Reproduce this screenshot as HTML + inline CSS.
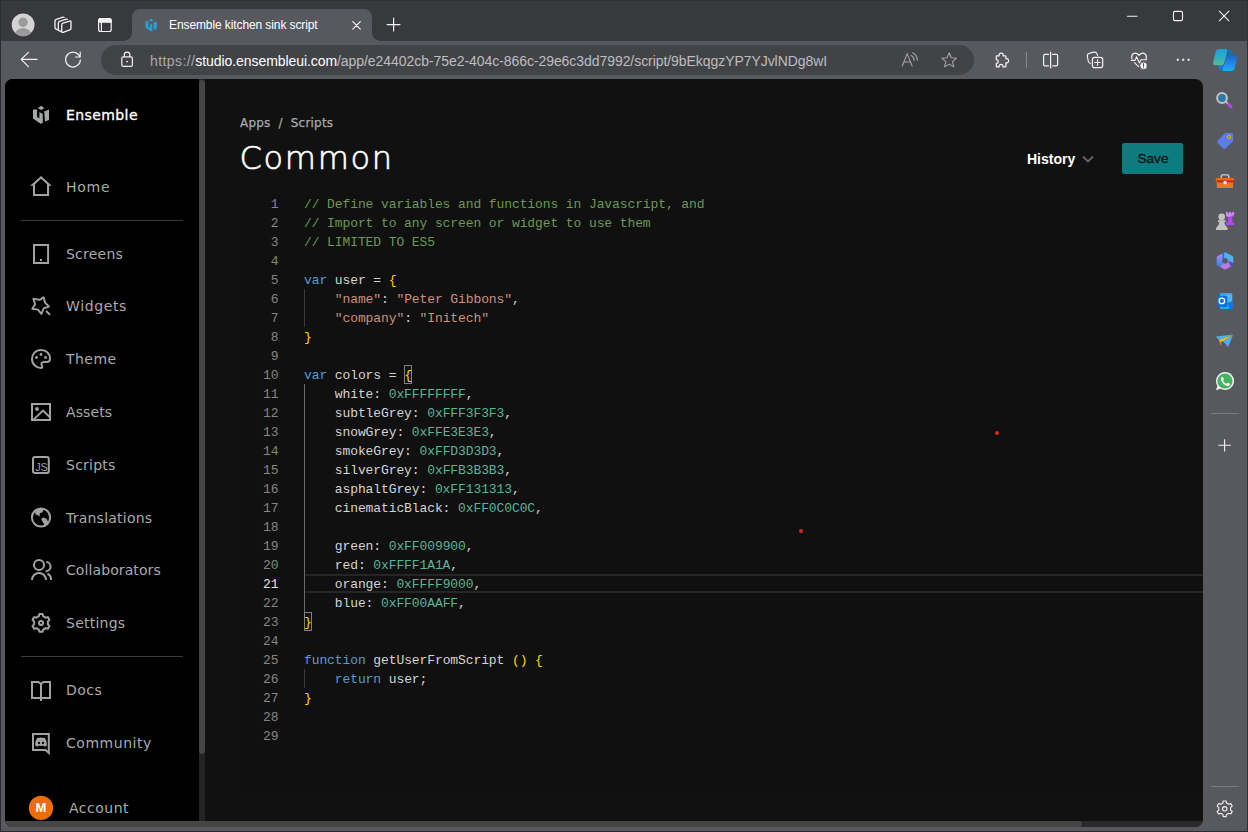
<!DOCTYPE html>
<html lang="en">
<head>
<meta charset="utf-8">
<title>Ensemble kitchen sink script</title>
<style>
*{box-sizing:border-box;margin:0;padding:0}
html,body{width:1248px;height:832px;overflow:hidden;background:#58595e;font-family:"Liberation Sans",sans-serif}
.abs{position:absolute}
#tabstrip{left:0;top:0;width:1248px;height:41px;background:#38393d}
#toolbar{left:0;top:41px;width:1248px;height:38px;background:#58595e}
#leftedge{left:0;top:0;width:1px;height:832px;background:#2b2b30}
#rightedge{left:1247px;top:0;width:1px;height:832px;background:#313236}
#botedge{left:0;top:831px;width:1248px;height:1px;background:#2b2b2f}
#topedge{left:0;top:0;width:1248px;height:1px;background:#2f3034}
#tab{left:132px;top:9px;width:240px;height:32px;background:#58595e;border-radius:8px 8px 0 0}
#tab:before,#tab:after{content:"";position:absolute;bottom:0;width:8px;height:8px}
#tab:before{left:-8px;background:radial-gradient(circle at 0 0,transparent 7.5px,#58595e 8px)}
#tab:after{right:-8px;background:radial-gradient(circle at 100% 0,transparent 7.5px,#58595e 8px)}
#tabtitle{left:169px;top:18px;font-size:12px;color:#fff;white-space:nowrap;letter-spacing:-0.1px}
#addr{left:101px;top:45px;width:873px;height:30px;border-radius:15px;background:#424347}
#url{left:150px;top:53px;font-size:14px;color:#bdbdc0;white-space:nowrap;letter-spacing:-0.02px}
#url b{font-weight:normal;color:#fff;letter-spacing:-0.07px}#url i{font-style:normal;color:#a9a9ad;letter-spacing:0.41px}#url u{text-decoration:none;letter-spacing:-0.06px}
#page{left:5px;top:79px;width:1198px;height:748px;background:#111111;border-radius:8px;overflow:hidden}
#side{left:0;top:0;width:194px;height:742px;background:#000}
#sscroll{left:194px;top:0;width:6px;height:742px;background:#222325}
#sthumb{left:194px;top:1px;width:6px;height:674px;background:#454545;border-radius:3px}
#hscroll{left:0;top:742px;width:1198px;height:6px;background:#2a2a2c}
#hthumb{left:0;top:742px;width:1077px;height:6px;background:#454545;border-radius:0 3px 3px 0}
.nav{position:absolute;left:61px;font-size:14px;color:#aaaaaa;white-space:nowrap;line-height:18px;font-family:"DejaVu Sans","Liberation Sans",sans-serif}
.sep{position:absolute;left:16px;width:162px;height:1px;background:#3a3a3a}
.ic{position:absolute;left:24px;width:24px;height:24px}
.ic svg{display:block}
#editor{left:235px;top:115px;width:963px;height:598px;background:#101010}
.ln{position:absolute;left:0;width:38.5px;text-align:right;font:13px/19px "Liberation Mono",monospace;letter-spacing:-0.1px;color:#858585}
.cl{position:absolute;left:64px;font:13px/19px "Liberation Mono",monospace;letter-spacing:-0.1px;color:#d4d4d4;white-space:pre}
.c{color:#6a9955}.k{color:#569cd6}.s{color:#ce9178}.n{color:#5bb498}.b{color:#ffd700}
#crumb{left:235px;top:37px;font-size:12px;letter-spacing:0.2px;-webkit-text-stroke:0.25px #a9a9a9;color:#a9a9a9;white-space:nowrap;font-family:"DejaVu Sans","Liberation Sans",sans-serif}
#title{left:234.5px;top:59px;font-size:32px;letter-spacing:1.7px;font-weight:200;-webkit-text-stroke:0.65px #fff;line-height:40px;color:#fff;white-space:nowrap;font-family:"DejaVu Sans","Liberation Sans",sans-serif}
#hist{left:1022px;top:72px;font-size:14px;font-weight:bold;color:#fff;white-space:nowrap}
#chev{left:1077px;top:75.5px}
#save{left:1117px;top:64px;width:61px;height:31px;background:#0e7b7f;color:#0c1414;font-size:13.5px;line-height:31px;text-align:center;border-radius:2px;-webkit-text-stroke:0.35px #0c1414;padding-left:1px;letter-spacing:0.1px}
#curline{left:64px;top:380px;width:899px;height:19px;border-top:2px solid #262626;border-bottom:2px solid #262626}
.ig{left:64px;width:1px;background:#3a3a3a}
.iga{background:#6a6a6a}
.bm{width:8.4px;height:19px;border:1px solid #808080;background:rgba(0,100,0,.05)}
.lna{color:#e0e0e0}
.dot{width:4px;height:4px;border-radius:50%;background:#d9271a}
#avm{left:24px;top:719px;width:24px;height:20px;text-align:center;font-size:13px;font-weight:bold;line-height:20px;color:#fff}
#nens{color:#fff;-webkit-text-stroke:0.3px #fff}
</style>
</head>
<body>
<div class="abs" id="tabstrip"></div>
<div class="abs" id="toolbar"></div>
<div class="abs" id="topedge"></div>
<div class="abs" id="tab"></div>
<div class="abs" id="tabtitle">Ensemble kitchen sink script</div>
<div class="abs" id="addr"></div>
<div class="abs" id="url"><i>https://</i><b>studio.ensembleui.com</b><u>/app/e24402cb-75e2-404c-866c-29e6c3dd7992/script/9bEkqgzYP7YJvlNDg8wI</u></div>
<!--CHROMEICONS-->
<svg class="abs" id="chromeicons" style="left:0;top:0" width="1248" height="80" viewBox="0 0 1248 80" fill="none" stroke="#f2f2f2" stroke-width="1.1" stroke-linecap="round" stroke-linejoin="round">
<defs><clipPath id="avc"><circle cx="23.1" cy="24.8" r="11.4"/></clipPath></defs>
<g stroke="none"><circle cx="23.1" cy="24.8" r="11.4" fill="#d3d3d3"/><circle cx="23.1" cy="22.2" r="4.7" fill="#9a9a9a"/><ellipse cx="23.1" cy="36.5" rx="9" ry="8.6" fill="#9a9a9a" clip-path="url(#avc)"/></g>
<path stroke-width="1.3" d="M61.7 25 Q61.7 23.6 63 23.2 L69.6 21.1 Q71 20.7 71 22.1 V28.3 Q71 29.5 69.8 29.9 L63.2 32.3 Q61.7 32.8 61.7 31.4Z"/>
<path stroke-width="1.3" d="M61.2 31.6 L59.4 30.9 Q58.3 30.5 58.3 29.3 V23 Q58.3 21.7 59.6 21.3 L66.3 19.2 Q67 19 67.4 19.4"/>
<path stroke-width="1.3" d="M57.8 29.9 L56.1 29.2 Q55 28.8 55 27.6 V21 Q55 19.7 56.3 19.3 L63 17.2 Q63.7 17 64.1 17.4"/>
<rect x="98.6" y="18.5" width="12.6" height="13" rx="2" stroke-width="1.2"/>
<path d="M98.6 22.3 V20.5 Q98.6 18.5 100.6 18.5 H109.2 Q111.2 18.5 111.2 20.5 V22.3Z" fill="#f2f2f2"/>
<path d="M101.4 22.3 V31.4" stroke-width="1.2"/>
<g fill="#1fa3dc" stroke="none" transform="translate(151.2 25) scale(0.7) translate(-41.1 -114.6)"><path d="M41.1 105.7 L44.4 107.9 L41.1 110.1 L37.8 107.9Z"/><path d="M33 109.4 H37.1 V117.3 L39.4 118.3 V112.1 L42.8 114.1 V122.9 L40.6 123.7 L33 118.6Z"/><path d="M44.2 111.4 L49 109.4 V119.9 L45 121.6Z"/></g>
<path d="M352.8 21.6 L360.3 29.1 M360.3 21.6 L352.8 29.1" stroke-width="1.2"/>
<path d="M387.2 24.6 H400 M393.6 18.2 V31" stroke-width="1.2"/>
<path d="M1127.5 16.3 H1137" stroke-width="1.1"/>
<rect x="1173.5" y="11.4" width="9" height="9.2" rx="1.3" stroke-width="1.1"/>
<path d="M1219.3 11.2 L1228.9 20.8 M1228.9 11.2 L1219.3 20.8" stroke-width="1.1"/>
<path d="M21.2 59.4 H37 M28.4 52.4 L21.2 59.4 L28.4 66.6" stroke-width="1.2"/>
<path d="M80.2 57 H75.6 M80.2 52.2 V57 M79.6 56.2 A7.4 7.4 0 1 0 80.4 60" stroke-width="1.2"/>
<rect x="121.8" y="56.8" width="10.6" height="9.6" rx="1.6" stroke-width="1.2"/>
<path d="M124.3 56.6 V55 A2.8 2.8 0 0 1 129.9 55 V56.6" stroke-width="1.2"/>
<circle cx="127.1" cy="61.6" r="0.9" fill="#f2f2f2" stroke="none"/>
<g stroke="#a4a4a8" stroke-width="1.1"><path d="M902.3 66 L907.2 53.6 L912.1 66 M904 62 H910.4"/><path d="M911.2 55.6 A5 5 0 0 1 914 60.4 M912.6 52.8 A8 8 0 0 1 917.2 60.2"/></g>
<path stroke="#a4a4a8" stroke-width="1.1" d="M949.2 52.8 L951.3 57.8 L956.6 58.2 L952.5 61.7 L953.8 66.9 L949.2 64.1 L944.6 66.9 L945.9 61.7 L941.8 58.2 L947.1 57.8Z"/>
<path transform="translate(-2.3 0.2)" stroke-width="1.25" d="M999.2 55.6 H1001.4 A2.1 2.1 0 1 1 1005.4 55.6 H1007.6 Q1008.2 55.6 1008.2 56.2 V58.6 A2.1 2.1 0 1 1 1008.2 62.6 V66 Q1008.2 66.6 1007.6 66.6 H1005.2 A1.9 1.9 0 1 0 1001.6 66.6 H999.2 Q998.6 66.6 998.6 66 V63.2 A1.9 1.9 0 1 0 998.6 59.4 V56.2 Q998.6 55.6 999.2 55.6Z"/>
<path d="M1026.4 52.4 V67.4" stroke="#8c8c91" stroke-width="1"/>
<path stroke-width="1.2" d="M1048.6 54.4 H1045 Q1043.6 54.4 1043.6 55.8 V64.4 Q1043.6 65.8 1045 65.8 H1048.6 M1052.6 54.4 H1056.2 Q1057.6 54.4 1057.6 55.8 V64.4 Q1057.6 65.8 1056.2 65.8 H1052.6 M1050.6 52.2 V68"/>
<rect x="1092.4" y="57.3" width="10.3" height="10.3" rx="2.2" stroke-width="1.2"/>
<path stroke-width="1.1" d="M1097.55 59.6 V65.3 M1094.7 62.45 H1100.4"/>
<path stroke-width="1.1" d="M1090.4 63.6 Q1088.6 62.6 1088.2 60.8 L1087.3 56.4 Q1086.9 54.2 1088.9 53.4 Q1091.4 52.4 1094.2 52.1 Q1096.4 51.9 1097 53.8 L1097.5 55.4"/>
<path stroke-width="1.15" d="M1131.9 58.6 Q1131 55.2 1133.2 53.7 Q1136.2 52 1139 55.3 Q1141.8 52 1144.8 53.7 Q1147 55.2 1146.1 58.6 M1134.4 62.6 L1138.6 66.6"/>
<path stroke-width="1.1" d="M1131.2 60.4 H1135 L1136.6 56.8 L1139.4 63 L1141 59.8 H1146.8"/>
<circle cx="1143.5" cy="65.8" r="3.7" fill="#f2f2f2" stroke="#58595e" stroke-width="0.8"/>
<path d="M1143.5 63.6 V66.3 M1143.5 67.8 V67.9" stroke="#3a3a3e" stroke-width="0.9"/>
<g fill="#f2f2f2" stroke="none"><rect x="1176.8" y="58.8" width="2" height="2"/><rect x="1182.2" y="58.8" width="2" height="2"/><rect x="1187.6" y="58.8" width="2" height="2"/></g>
<defs><linearGradient id="cpa" x1="0" y1="0" x2="0" y2="1"><stop offset="0" stop-color="#1ba0d8"/><stop offset="0.55" stop-color="#2fb0c4"/><stop offset="1" stop-color="#57b98c"/></linearGradient><linearGradient id="cpb" x1="0" y1="0" x2="0" y2="1"><stop offset="0" stop-color="#1b62c9"/><stop offset="0.5" stop-color="#1f86e6"/><stop offset="1" stop-color="#19b2f0"/></linearGradient></defs>
<g stroke="none"><path fill="#1a6fa8" d="M1225.5 49 H1229.6 Q1231.4 49 1232 50.8 L1233.4 55.4 H1228Z"/><path fill="#0f4aa6" d="M1225.6 49 H1228.6 L1226.6 55.6 L1225 54Z"/><path fill="#1b78d9" d="M1217.6 64 H1223.4 L1224.8 70.9 H1222 Q1219.8 70.9 1219.2 69Z"/><path fill="url(#cpa)" d="M1219.4 48.9 H1226.4 Q1228 48.9 1227.6 50.5 L1223.9 63.6 Q1223.4 65.2 1221.8 65.2 H1215.6 Q1212.4 65.2 1213.2 62 L1215.6 52 Q1216.4 48.9 1219.4 48.9Z"/><path fill="url(#cpb)" d="M1228.6 55 H1234.2 Q1237.8 55 1237 58.4 L1234.8 68 Q1234.1 70.9 1231 70.9 H1223.8 Q1222.4 70.9 1222.8 69.4 L1226.4 56.6 Q1226.9 55 1228.6 55Z"/></g>
</svg>
<!--/CHROMEICONS-->
<div class="abs" id="page">
  <div class="abs" id="side">
<!--SIDE-->
<svg class="abs" id="sideicons" style="left:0;top:0" width="194" height="748" viewBox="5 79 194 748" fill="none" stroke="#a2a2a2" stroke-width="2">
<g fill="#a3a8a4" stroke="none"><path d="M41.1 105.7 L44.4 107.9 L41.1 110.1 L37.8 107.9Z"/><path d="M33 109.4 H37.1 V117.3 L39.4 118.3 V112.1 L42.8 114.1 V122.9 L40.6 123.7 L33 118.6Z"/><path d="M44.2 111.4 L49 109.4 V119.9 L45 121.6Z"/></g>
<path fill="#a2a2a2" stroke="none" fill-rule="evenodd" d="M41 176 L51.8 185.7 H49.1 V196 H33 V185.7 H30.1 Z M41 178.8 L35 184.2 V194 H47 V184.2 Z"/>
<rect x="34" y="245" width="14.1" height="18"/>
<rect x="40" y="259" width="2" height="2" fill="#a2a2a2" stroke="none"/>
<path stroke-width="1.9" stroke-linejoin="round" d="M33.3 298.8 L39.6 299.9 L43.6 297.2 L45 302.6 L48.9 306.5 L43.7 308.4 L41.4 313.9 L37.9 309.6 L32.3 308.8 L35.1 304.3 Z"/><path d="M46 311 L50 314.7"/>
<path d="M41 350 C35.5 350 32 354 32 359 C32 364.5 36.5 368 41 368 C42.3 368 42.6 367 42 366 C40.6 363.5 41.8 362 44 362 H46.5 C49 362 50 360.3 50 358.5 C50 354 46.5 350 41 350Z"/>
<g fill="#a2a2a2" stroke="none"><circle cx="36.5" cy="357.5" r="1.4"/><circle cx="41" cy="354.5" r="1.4"/><circle cx="45.5" cy="357.5" r="1.4"/></g>
<rect x="32" y="404" width="18" height="16"/>
<circle cx="37" cy="409" r="1.9" fill="#a2a2a2" stroke="none"/>
<path stroke-width="1.9" d="M33.8 419.4 L43 410.6 L49.6 417"/>
<rect x="33" y="457" width="15.8" height="16" rx="2"/>
<text x="35.2" y="471" font-family="Liberation Sans, sans-serif" font-size="10.8" fill="#a2a2a2" stroke="none" letter-spacing="-0.2">JS</text>
<circle cx="41" cy="517.5" r="9.1"/>
<path fill="#a2a2a2" stroke="none" d="M33.6 513.5 C34.6 510.5 37.5 508.3 41 508 C43 508 45 508.6 46.5 509.6 L43.2 510.3 L42.4 512.4 L39.8 513 L39.6 516.6 L37.5 515 L35.6 514.6 L35 512 Z"/>
<path fill="#a2a2a2" stroke="none" d="M41.2 518.6 L44 517.6 L46.8 519.2 L48 521.5 L49 522 C48 524 46.5 525.5 44.6 526.3 L44 524 L42.4 521.5 Z"/>
<circle cx="39" cy="565" r="5"/>
<path d="M32 580 A7 7 0 0 1 46 580"/>
<path d="M46.3 562 A4.6 4.6 0 0 1 45.6 571.2"/>
<path d="M47.4 573.6 A6.5 6.5 0 0 1 51 580"/>
<path stroke-linejoin="round" d="M38.84 616.24 L39.41 614.04 L42.59 614.04 L43.16 616.24 L45.68 617.70 L47.87 617.09 L49.47 619.85 L47.85 621.44 L47.85 624.36 L49.47 625.95 L47.87 628.71 L45.68 628.10 L43.16 629.56 L42.59 631.76 L39.41 631.76 L38.84 629.56 L36.32 628.10 L34.13 628.71 L32.53 625.95 L34.15 624.36 L34.15 621.44 L32.53 619.85 L34.13 617.09 L36.32 617.70Z"/>
<circle cx="41" cy="622.9" r="2"/>
<path d="M32 682 H38.5 L41 684 L43.5 682 H50 V698 H32 Z"/><path d="M41 683.5 V701"/>
<path d="M33 734 H48.8 V753 L45.6 750 H33 Z" stroke-linejoin="miter"/>
<path fill="#a2a2a2" stroke="none" fill-rule="evenodd" d="M37 738 Q41 737 45 738 Q47 741 47 745.2 Q45.6 746.5 44.2 746.8 L43.5 745.6 Q41 746.2 38.5 745.6 L37.8 746.8 Q36.4 746.5 35 745.2 Q35 741 37 738Z M39 741.8 a1.1 1.1 0 1 0 0.01 0Z M43 741.8 a1.1 1.1 0 1 0 0.01 0Z"/>
<circle cx="41" cy="807.9" r="12.2" fill="#ec6d05" stroke="none"/>
</svg>
    <div class="nav" id="nens" style="top:27px;letter-spacing:0.41px">Ensemble</div>
    <div class="nav" id="nhom" style="top:99px;letter-spacing:0.75px">Home</div>
    <div class="nav" id="nscr" style="top:166px;letter-spacing:0.23px">Screens</div>
    <div class="nav" id="nwid" style="top:218px;letter-spacing:0.63px">Widgets</div>
    <div class="nav" id="nthe" style="top:271px;letter-spacing:0.46px">Theme</div>
    <div class="nav" id="nass" style="top:324px;letter-spacing:0.12px">Assets</div>
    <div class="nav" id="nscr" style="top:377px;letter-spacing:0.24px">Scripts</div>
    <div class="nav" id="ntra" style="top:430px;letter-spacing:0.23px">Translations</div>
    <div class="nav" id="ncol" style="top:482px;letter-spacing:0.09px">Collaborators</div>
    <div class="nav" id="nset" style="top:535px;letter-spacing:0.24px">Settings</div>
    <div class="nav" id="ndoc" style="top:602px;letter-spacing:0.50px">Docs</div>
    <div class="nav" id="ncom" style="top:655px;letter-spacing:0.53px">Community</div>
    <div class="nav" id="nacc" style="top:720px;letter-spacing:0.51px;left:64px">Account</div>
    <div class="abs" id="avm">M</div>
    <div class="sep" style="top:141px"></div>
    <div class="sep" style="top:577px"></div>
<!--/SIDE-->
  </div>
  <div class="abs" id="sscroll"></div>
  <div class="abs" id="sthumb"></div>
<!--MAIN-->
  <div class="abs" id="crumb">Apps&nbsp; / &nbsp;Scripts</div>
  <div class="abs" id="title">Common</div>
  <div class="abs" id="hist">History</div>
  <svg class="abs" id="chev" width="12" height="8" viewBox="0 0 12 8"><path d="M1 1.5 L6 6.5 L11 1.5" fill="none" stroke="#62666e" stroke-width="1.8"/></svg>
  <div class="abs" id="save">Save</div>
  <div class="abs" id="editor">
    <div class="abs" id="curline"></div>
    <div class="abs ig" style="top:95px;height:38px"></div>
    <div class="abs ig iga" style="top:190px;height:228px"></div>
    <div class="abs ig" style="top:475px;height:19px"></div>
    <div class="abs bm" style="top:171px;left:163.6px"></div>
    <div class="abs bm" style="top:418px;left:63.6px"></div>
    <div class="ln" style="top:1px">1</div>
    <div class="cl" style="top:1px"><span class="c">// Define variables and functions in Javascript, and</span></div>
    <div class="ln" style="top:20px">2</div>
    <div class="cl" style="top:20px"><span class="c">// Import to any screen or widget to use them</span></div>
    <div class="ln" style="top:39px">3</div>
    <div class="cl" style="top:39px"><span class="c">// LIMITED TO ES5</span></div>
    <div class="ln" style="top:58px">4</div>
    <div class="ln" style="top:77px">5</div>
    <div class="cl" style="top:77px"><span class="k">var</span> user = <span class="b">{</span></div>
    <div class="ln" style="top:96px">6</div>
    <div class="cl" style="top:96px">    <span class="s">"name"</span>: <span class="s">"Peter Gibbons"</span>,</div>
    <div class="ln" style="top:115px">7</div>
    <div class="cl" style="top:115px">    <span class="s">"company"</span>: <span class="s">"Initech"</span></div>
    <div class="ln" style="top:134px">8</div>
    <div class="cl" style="top:134px"><span class="b">}</span></div>
    <div class="ln" style="top:153px">9</div>
    <div class="ln" style="top:172px">10</div>
    <div class="cl" style="top:172px"><span class="k">var</span> colors = <span class="b">{</span></div>
    <div class="ln" style="top:191px">11</div>
    <div class="cl" style="top:191px">    white: <span class="n">0xFFFFFFFF</span>,</div>
    <div class="ln" style="top:210px">12</div>
    <div class="cl" style="top:210px">    subtleGrey: <span class="n">0xFFF3F3F3</span>,</div>
    <div class="ln" style="top:229px">13</div>
    <div class="cl" style="top:229px">    snowGrey: <span class="n">0xFFE3E3E3</span>,</div>
    <div class="ln" style="top:248px">14</div>
    <div class="cl" style="top:248px">    smokeGrey: <span class="n">0xFFD3D3D3</span>,</div>
    <div class="ln" style="top:267px">15</div>
    <div class="cl" style="top:267px">    silverGrey: <span class="n">0xFFB3B3B3</span>,</div>
    <div class="ln" style="top:286px">16</div>
    <div class="cl" style="top:286px">    asphaltGrey: <span class="n">0xFF131313</span>,</div>
    <div class="ln" style="top:305px">17</div>
    <div class="cl" style="top:305px">    cinematicBlack: <span class="n">0xFF0C0C0C</span>,</div>
    <div class="ln" style="top:324px">18</div>
    <div class="ln" style="top:343px">19</div>
    <div class="cl" style="top:343px">    green: <span class="n">0xFF009900</span>,</div>
    <div class="ln" style="top:362px">20</div>
    <div class="cl" style="top:362px">    red: <span class="n">0xFFFF1A1A</span>,</div>
    <div class="ln lna" style="top:381px">21</div>
    <div class="cl" style="top:381px">    orange: <span class="n">0xFFFF9000</span>,</div>
    <div class="ln" style="top:400px">22</div>
    <div class="cl" style="top:400px">    blue: <span class="n">0xFF00AAFF</span>,</div>
    <div class="ln" style="top:419px">23</div>
    <div class="cl" style="top:419px"><span class="b">}</span></div>
    <div class="ln" style="top:438px">24</div>
    <div class="ln" style="top:457px">25</div>
    <div class="cl" style="top:457px"><span class="k">function</span> getUserFromScript <span class="b">()</span> <span class="b">{</span></div>
    <div class="ln" style="top:476px">26</div>
    <div class="cl" style="top:476px">    <span class="k">return</span> user;</div>
    <div class="ln" style="top:495px">27</div>
    <div class="cl" style="top:495px"><span class="b">}</span></div>
    <div class="ln" style="top:514px">28</div>
    <div class="ln" style="top:533px">29</div>
  </div>
  <div class="abs dot" style="left:989.6px;top:352.3px"></div>
  <div class="abs dot" style="left:793.8px;top:450.3px"></div>
<!--/MAIN-->
  <div class="abs" id="hscroll"></div>
  <div class="abs" id="hthumb"></div>
</div>
<!--EDGEBAR-->
<svg class="abs" id="edgebar" style="left:1203px;top:79px" width="45" height="753" viewBox="1203 79 45 753" fill="none">
<path d="M1225.8 101.8 L1228.4 104.2" stroke="#b9b9b4" stroke-width="2"/>
<path d="M1228.6 104.4 L1231 106.6" stroke="#b246ea" stroke-width="3.2" stroke-linecap="round"/>
<circle cx="1222" cy="98" r="4.9" fill="#2b79a9" stroke="#c4c4be" stroke-width="2"/>
<path d="M1225.2 133 H1231.4 Q1233.2 133 1233.2 134.8 V141 L1225.6 148.6 Q1224.4 149.6 1223.2 148.6 L1217.6 143 Q1216.6 141.8 1217.6 140.6Z" fill="#5b7ce9"/>
<circle cx="1229" cy="137" r="1.4" fill="#6b5a2a" stroke="#ecc000" stroke-width="1.1"/>
<path d="M1221.2 178 V176.2 Q1221.2 174.8 1222.6 174.8 H1227.4 Q1228.8 174.8 1228.8 176.2 V178" stroke="#d2d2d2" stroke-width="1.3"/>
<rect x="1215.8" y="177.9" width="18.2" height="4.6" rx="0.6" fill="#ea671c"/><rect x="1216.8" y="180.4" width="17.2" height="2.1" fill="#c6240f"/><rect x="1216.8" y="182.5" width="16.2" height="5.5" fill="#eb7721"/>
<circle cx="1225.1" cy="182.6" r="1.8" fill="#d9e6ee"/>
<g fill="#c3c3c1"><circle cx="1221.7" cy="216.9" r="3.3"/><path d="M1218 220.2 H1225.6 Q1226.2 221.4 1225.2 222.2 H1224.2 Q1224.6 225.4 1226.8 227 Q1228 228.2 1227.6 229.9 H1216 Q1215.6 228.2 1216.8 227 Q1219 225.4 1219.4 222.2 H1218.4 Q1217.4 221.4 1218 220.2Z"/></g>
<path fill="#b946f2" d="M1226 212 H1227.8 V213.6 H1229 V212 H1231 V213.6 H1232.2 V212 H1234.1 V216.2 L1232 217.4 L1232.6 222.4 H1234.1 V225 H1226 V222.4 H1227.6 L1228.2 217.4 L1226 216.2Z"/>
<path fill="#cf9af6" d="M1226 212 H1227.8 V213.6 H1229 V212 H1231 V213.6 H1232.2 V212 H1234.1 V215 L1229 217 L1226 216Z" opacity="0.8"/>
<defs><linearGradient id="m3a" x1="0" y1="0" x2="0" y2="1"><stop offset="0" stop-color="#c684f2"/><stop offset="0.5" stop-color="#6f8cf2"/><stop offset="1" stop-color="#2b7be0"/></linearGradient></defs>
<path fill="url(#m3a)" d="M1222.6 253.4 L1217.6 256.1 Q1216.7 256.6 1216.7 257.6 V264.3 Q1216.7 265.3 1217.6 265.8 L1220.2 267.2 L1225 261Z"/>
<path fill="#4db3ee" d="M1222.4 253.5 L1224.1 252.5 Q1225 252 1225.9 252.5 L1232.4 256.1 Q1233.3 256.6 1233.3 257.6 V263.2 L1225 261Z"/>
<path fill="#1c6cd2" d="M1222.4 253.5 L1224.2 252.6 V258.6 L1222.6 260Z"/>
<path fill="#b97ae8" d="M1220 267.1 L1224.1 269.3 Q1225 269.8 1225.9 269.3 L1231.4 266.3 L1229 261.6 L1225 261Z"/>
<path fill="#5a49c2" d="M1228 260.4 L1233.3 263 V264.3 Q1233.3 265.3 1232.4 265.8 L1230.8 266.7Z"/>
<circle cx="1225.1" cy="260.8" r="2.8" fill="#58595e"/>
<rect x="1219.9" y="293" width="12.3" height="16" rx="1" fill="#1daef0"/><rect x="1226" y="294.4" width="6.2" height="7.4" fill="#52b7f0"/><path d="M1227.4 303.4 L1233 300.4 V308.2 Q1233 309 1232.2 309 H1229.4Z" fill="#1577d8"/>
<rect x="1217" y="296.1" width="10.3" height="10.8" rx="1.2" fill="#1170d0"/><circle cx="1221.9" cy="300.9" r="2.7" stroke="#fff" stroke-width="1.3"/>
<path fill="#49b3f1" d="M1216 336.4 L1233.1 334.6 L1219 340.2Z"/>
<path fill="#f8c104" d="M1219 340 L1232.4 335 L1223.6 341.4 L1220.8 342.2 L1219.6 342.4Z"/>
<path fill="#f07206" d="M1219.8 341.6 L1221.6 341 L1221.2 345 L1220.2 345.6Z"/>
<path fill="#0c62c4" d="M1221.8 341.6 L1223.4 341.2 L1223 344.4 L1222.2 344.8Z"/>
<path fill="#4ab0f2" d="M1223.2 341.4 L1233.1 334.8 L1228.2 347.1Z"/>
<path fill="#6f8df5" d="M1226 344.4 L1229.6 343.6 L1228.2 347.1Z" opacity="0.8"/>
<path fill="#ececec" d="M1224.9 372 A9 9 0 1 1 1220.6 388.8 L1216 390.2 L1217.4 385.8 A9 9 0 0 1 1224.9 372Z"/>
<circle cx="1224.9" cy="381" r="7.6" fill="#44b55e"/>
<path fill="#fff" d="M1221.6 377.2 Q1222.4 376.4 1223 377.4 L1223.8 379 Q1224 379.6 1223.4 380.2 Q1223 380.6 1223.4 381.2 Q1224.4 382.8 1226 383.6 Q1226.6 383.8 1227 383.4 Q1227.6 382.6 1228.2 383 L1229.8 383.8 Q1230.4 384.2 1229.8 385 Q1228.4 386.6 1226.2 385.8 Q1222.8 384.4 1221.4 381 Q1220.4 378.6 1221.6 377.2Z"/>
<path d="M1211 413.5 H1239 M1211 786.5 H1239" stroke="#7a7b80" stroke-width="1"/>
<path d="M1218.4 445.3 H1230.8 M1224.6 439.2 V451.6" stroke="#f2f2f2" stroke-width="1.1"/>
<path stroke="#f2f2f2" stroke-width="1.1" stroke-linejoin="round" d="M1222.85 803.09 L1223.28 800.93 L1226.12 800.93 L1226.55 803.09 L1228.71 804.34 L1230.81 803.64 L1232.23 806.09 L1230.57 807.55 L1230.57 810.05 L1232.23 811.51 L1230.81 813.96 L1228.71 813.26 L1226.55 814.51 L1226.12 816.67 L1223.28 816.67 L1222.85 814.51 L1220.69 813.26 L1218.59 813.96 L1217.17 811.51 L1218.83 810.05 L1218.83 807.55 L1217.17 806.09 L1218.59 803.64 L1220.69 804.34Z"/>
<circle cx="1224.7" cy="808.8" r="2.2" stroke="#f2f2f2" stroke-width="1.1"/>
</svg>
<!--/EDGEBAR-->
<div class="abs" id="leftedge"></div>
<div class="abs" id="rightedge"></div>
<div class="abs" id="botedge"></div>
</body>
</html>
